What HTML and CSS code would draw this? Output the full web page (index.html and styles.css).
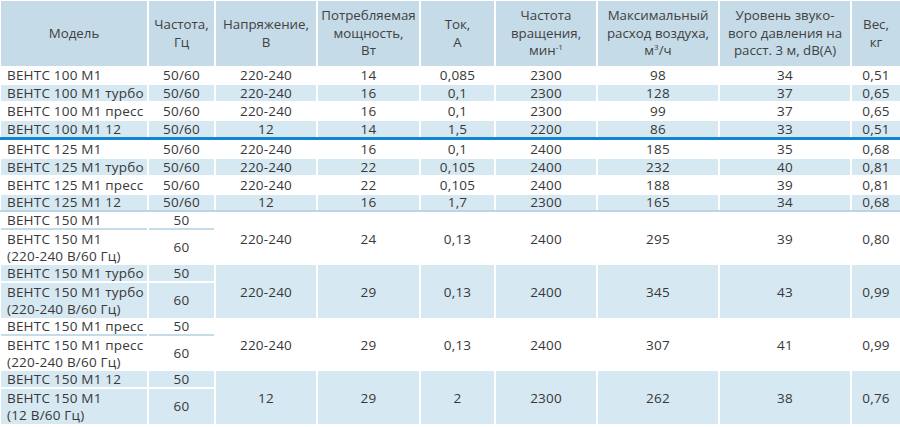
FILE: index.html
```html
<!DOCTYPE html>
<html lang="ru">
<head>
<meta charset="utf-8">
<title>ВЕНТС М1</title>
<link rel="stylesheet" href="styles.css">
</head>
<body>
<table class="spec">
  <colgroup>
    <col class="c-model"><col class="c-freq"><col class="c-volt"><col class="c-pow"><col class="c-cur"><col class="c-rpm"><col class="c-air"><col class="c-noise"><col class="c-wt">
  </colgroup>
  <thead>
    <tr class="head">
      <th>Модель</th>
      <th>Частота,<br>Гц</th>
      <th>Напряжение,<br>В</th>
      <th>Потребляемая<br>мощность,<br>Вт</th>
      <th>Ток,<br>А</th>
      <th>Частота<br>вращения,<br>мин<sup>-1</sup></th>
      <th>Максимальный<br>расход воздуха,<br>м<sup>3</sup>/ч</th>
      <th>Уровень звуко-<br>вого давления на<br>расст. 3 м, dB(A)</th>
      <th>Вес,<br>кг</th>
    </tr>
  </thead>
  <tbody>
    <tr class="r">
      <td class="model">ВЕНТС 100 М1</td><td>50/60</td><td>220-240</td><td>14</td><td>0,085</td><td>2300</td><td>98</td><td>34</td><td>0,51</td>
    </tr>
    <tr class="r alt">
      <td class="model">ВЕНТС 100 М1 турбо</td><td>50/60</td><td>220-240</td><td>16</td><td>0,1</td><td>2300</td><td>128</td><td>37</td><td>0,65</td>
    </tr>
    <tr class="r">
      <td class="model">ВЕНТС 100 М1 пресс</td><td>50/60</td><td>220-240</td><td>16</td><td>0,1</td><td>2300</td><td>99</td><td>37</td><td>0,65</td>
    </tr>
    <tr class="r alt r-last">
      <td class="model">ВЕНТС 100 М1 12</td><td>50/60</td><td>12</td><td>14</td><td>1,5</td><td>2200</td><td>86</td><td>33</td><td>0,51</td>
    </tr>
    <tr class="rule-blue"><td colspan="9"></td></tr>
    <tr class="r">
      <td class="model">ВЕНТС 125 М1</td><td>50/60</td><td>220-240</td><td>16</td><td>0,1</td><td>2400</td><td>185</td><td>35</td><td>0,68</td>
    </tr>
    <tr class="r alt">
      <td class="model">ВЕНТС 125 М1 турбо</td><td>50/60</td><td>220-240</td><td>22</td><td>0,105</td><td>2400</td><td>232</td><td>40</td><td>0,81</td>
    </tr>
    <tr class="r">
      <td class="model">ВЕНТС 125 М1 пресс</td><td>50/60</td><td>220-240</td><td>22</td><td>0,105</td><td>2400</td><td>188</td><td>39</td><td>0,81</td>
    </tr>
    <tr class="r alt r-short">
      <td class="model">ВЕНТС 125 М1 12</td><td>50/60</td><td>12</td><td>16</td><td>1,7</td><td>2300</td><td>165</td><td>34</td><td>0,68</td>
    </tr>
    <tr class="rule-soft"><td colspan="9"></td></tr>

    <tr class="g1">
      <td class="model split">ВЕНТС 150 М1</td><td class="split">50</td>
      <td rowspan="2" class="span">220-240</td><td rowspan="2" class="span">24</td><td rowspan="2" class="span">0,13</td><td rowspan="2" class="span">2400</td><td rowspan="2" class="span">295</td><td rowspan="2" class="span">39</td><td rowspan="2" class="span">0,80</td>
    </tr>
    <tr class="g2">
      <td class="model two">ВЕНТС 150 М1<br>(220-240 В/60 Гц)</td><td class="two">60</td>
    </tr>

    <tr class="g1 galt">
      <td class="model split">ВЕНТС 150 М1 турбо</td><td class="split">50</td>
      <td rowspan="2" class="span">220-240</td><td rowspan="2" class="span">29</td><td rowspan="2" class="span">0,13</td><td rowspan="2" class="span">2400</td><td rowspan="2" class="span">345</td><td rowspan="2" class="span">43</td><td rowspan="2" class="span">0,99</td>
    </tr>
    <tr class="g2 galt">
      <td class="model two">ВЕНТС 150 М1 турбо<br>(220-240 В/60 Гц)</td><td class="two">60</td>
    </tr>

    <tr class="g1">
      <td class="model split">ВЕНТС 150 М1 пресс</td><td class="split">50</td>
      <td rowspan="2" class="span">220-240</td><td rowspan="2" class="span">29</td><td rowspan="2" class="span">0,13</td><td rowspan="2" class="span">2400</td><td rowspan="2" class="span">307</td><td rowspan="2" class="span">41</td><td rowspan="2" class="span">0,99</td>
    </tr>
    <tr class="g2">
      <td class="model two">ВЕНТС 150 М1 пресс<br>(220-240 В/60 Гц)</td><td class="two">60</td>
    </tr>

    <tr class="g1 galt">
      <td class="model split">ВЕНТС 150 М1 12</td><td class="split">50</td>
      <td rowspan="2" class="span">12</td><td rowspan="2" class="span">29</td><td rowspan="2" class="span">2</td><td rowspan="2" class="span">2300</td><td rowspan="2" class="span">262</td><td rowspan="2" class="span">38</td><td rowspan="2" class="span">0,76</td>
    </tr>
    <tr class="g2 galt">
      <td class="model two">ВЕНТС 150 М1<br>(12 В/60 Гц)</td><td class="two">60</td>
    </tr>
  </tbody>
</table>
</body>
</html>
```
FILE: styles.css
```css
html, body {
  margin: 0;
  padding: 0;
  background: #ffffff;
}

body {
  font-family: "Open Sans", "Noto Sans", "DejaVu Sans", sans-serif;
  color: #383838;
}

.spec {
  border-collapse: separate;
  border-spacing: 2px 0;
  table-layout: fixed;
  width: 903px;
  margin: 1px 0 0 -1px;
  font-size: 13.3px;
}

.c-model { width: 146px; }
.c-freq  { width: 65px; }
.c-volt  { width: 100px; }
.c-pow   { width: 101px; }
.c-cur   { width: 73px; }
.c-rpm   { width: 100px; }
.c-air   { width: 120px; }
.c-noise { width: 130px; }
.c-wt    { width: 48px; }

.head { height: 65px; }

.spec th {
  background: #c5dbe8;
  color: #414141;
  font-weight: normal;
  line-height: 17.5px;
  padding: 0;
  text-align: center;
  vertical-align: middle;
  white-space: nowrap;
}

.spec sup {
  font-size: 8px;
  line-height: 0;
  vertical-align: 5px;
}

.spec td {
  padding: 0;
  text-align: center;
  vertical-align: middle;
  white-space: nowrap;
  font-size: 13.5px;
  letter-spacing: 0.2px;
}

.spec td.model {
  text-align: left;
  padding-left: 6px;
}

/* simple rows */
.r { height: 18px; }
.r td {
  line-height: 16px;
  border-top: 1px solid #ffffff;
  border-bottom: 1px solid #ffffff;
}
.alt td { background: #d6e8f1; }

.r-last { height: 17px; }
.r-last td { border-bottom: 0; }

.r-short { height: 16px; }
.r-short td { border-bottom: 0; line-height: 15px; }

/* full-width rules */
.rule-blue { height: 3px; }
.rule-blue td {
  height: 3px;
  line-height: 0;
  font-size: 0;
  background: #0f86d2;
  box-shadow: -2px 0 0 #0f86d2, 2px 0 0 #0f86d2;
}

.rule-soft { height: 2px; }
.rule-soft td {
  height: 2px;
  line-height: 0;
  font-size: 0;
  background: #bcd4e4;
  box-shadow: -2px 0 0 #bcd4e4, 2px 0 0 #bcd4e4;
}

/* grouped rows */
.g1 { height: 18px; }
.g1 td { line-height: 16px; }
.g1 td.split { border-bottom: 2px solid #c5dbe8; }
.g2 { height: 35px; }
.g2 td { line-height: 17px; }

.galt td { background: #d6e8f1; }
.galt td.split { border-bottom-color: #ffffff; }
```
